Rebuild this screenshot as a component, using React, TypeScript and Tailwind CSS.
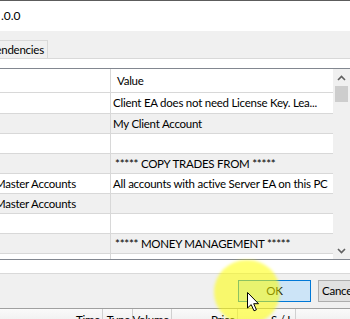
import React from "react";

const rows = [
  { name: "", value: "Client EA does not need License Key. Lea...", gray: false, first: true },
  { name: "", value: "My Client Account", gray: true },
  { name: "", value: "", gray: false },
  { name: "", value: "***** COPY TRADES FROM *****", gray: true, star: true },
  { name: "Master Accounts", value: "All accounts with active Server EA on this PC", gray: false },
  { name: "Master Accounts", value: "", gray: true },
  { name: "", value: "", gray: false },
  { name: "", value: "***** MONEY MANAGEMENT *****", gray: true, star: true },
];

const terminalCols = [
  { label: "Time", w: "w-[103px]" },
  { label: "Type", w: "w-[30px]" },
  { label: "Volume", w: "w-[39px]" },
  { label: "Price", w: "w-[66px]" },
  { label: "S / L", w: "w-[58px]" },
  { label: "T /", w: "w-[80px]" },
];

function Chevron({ down }: { down?: boolean }) {
  return (
    <svg width="9" height="6" viewBox="0 0 9 6" className={down ? "rotate-180" : ""}>
      <path d="M1 5 L4.5 1.5 L8 5" fill="none" stroke="#606060" strokeWidth="1.6" />
    </svg>
  );
}

export default function App() {
  return (
    <div className="relative w-[350px] h-[319px] overflow-hidden bg-white text-[11.5px] tracking-[-0.25px] text-black font-['Lato','Liberation_Sans',sans-serif]">
      {/* window top edge + title */}
      <div className="h-px bg-[#5c5c5c]" />
      <div className="h-[30px] flex items-center pl-[1px] text-[12px] tracking-normal">.0.0</div>

      {/* tabs strip */}
      <div className="h-[27px] bg-[#f0f0f0] flex items-end">
        <div className="h-[18px] border border-b-0 border-l-0 border-[#d9d9d9] bg-[#f0f0f0] overflow-hidden flex items-center pr-[3px]">
          <span className="ml-[-25px] whitespace-nowrap">Dependencies</span>
        </div>
      </div>

      {/* tab page */}
      <div className="h-[216px] border-y border-[#d9d9d9] bg-white pt-[9px]">
        <div className="h-[192px] border-y border-[#828790] flex">
          <div className="flex-1 flex flex-col overflow-hidden">
            {/* header */}
            <div className="h-[24px] flex border-b border-[#d8d8d8] shrink-0">
              <div className="w-[111px] border-r border-[#d8d8d8]" />
              <div className="flex-1 flex items-center pl-[6px]">Value</div>
            </div>
            {rows.map((r, i) => (
              <div
                key={i}
                className={`${r.first ? "h-[21px]" : "h-[20px]"} shrink-0 flex border-b border-[#d8d8d8] ${
                  r.gray ? "bg-[#f0f0f0]" : "bg-white"
                }`}
              >
                <div className="w-[111px] border-r border-[#d8d8d8] flex items-center overflow-hidden">
                  <span className="ml-[-5px] whitespace-nowrap">{r.name}</span>
                </div>
                <div className={`flex-1 flex items-center whitespace-nowrap overflow-hidden ${r.star ? "pl-[4px]" : "pl-[2px]"}`}>
                  {r.value}
                </div>
              </div>
            ))}
            <div className="flex-1 flex">
              <div className="w-[111px] border-r border-[#d8d8d8]" />
            </div>
          </div>
          {/* scrollbar */}
          <div className="w-[17px] bg-[#f0f0f0] flex flex-col items-center">
            <div className="h-[17px] flex items-center justify-center">
              <Chevron />
            </div>
            <div className="w-[13px] h-[16px] bg-[#cdcdcd]" />
            <div className="flex-1" />
            <div className="h-[17px] flex items-center justify-center">
              <Chevron down />
            </div>
          </div>
        </div>
      </div>

      {/* buttons */}
      <div className="h-[34px] bg-[#f0f0f0] flex items-center pl-[238px] gap-[7px]">
        <div className="w-[73px] h-[22px] shrink-0 border border-[#0078d7] bg-[#cce4f7] flex items-center justify-center">
          OK
        </div>
        <div className="w-[75px] h-[22px] shrink-0 border border-[#adadad] bg-[#e1e1e1] flex items-center pl-[3px]">
          Cancel
        </div>
      </div>

      {/* terminal header underneath */}
      <div className="h-[22px] border-t border-[#a0a0a0] bg-gradient-to-b from-[#fafafa] to-[#e9e9e9] flex">
        {terminalCols.map((c) => (
          <div key={c.label} className={`${c.w} shrink-0 border-r border-[#d0d0d0] flex items-center justify-end pr-[2px] whitespace-nowrap`}>
            {c.label}
          </div>
        ))}
      </div>

      {/* click highlight */}
      <div className="absolute left-[214px] top-[260px] w-[66px] h-[64px] rounded-full bg-[#ffff00]/55 blur-[1.5px] pointer-events-none" />

      {/* mouse cursor */}
      <svg className="absolute left-[247px] top-[292px]" width="13" height="20" viewBox="0 0 13 20">
        <path
          d="M0.5 0.5 L0.5 16 L4.2 12.6 L7 18.8 L9.4 17.8 L6.7 11.7 L11.5 11.7 Z"
          fill="white"
          stroke="black"
          strokeWidth="1"
          strokeLinejoin="round"
        />
      </svg>
    </div>
  );
}
